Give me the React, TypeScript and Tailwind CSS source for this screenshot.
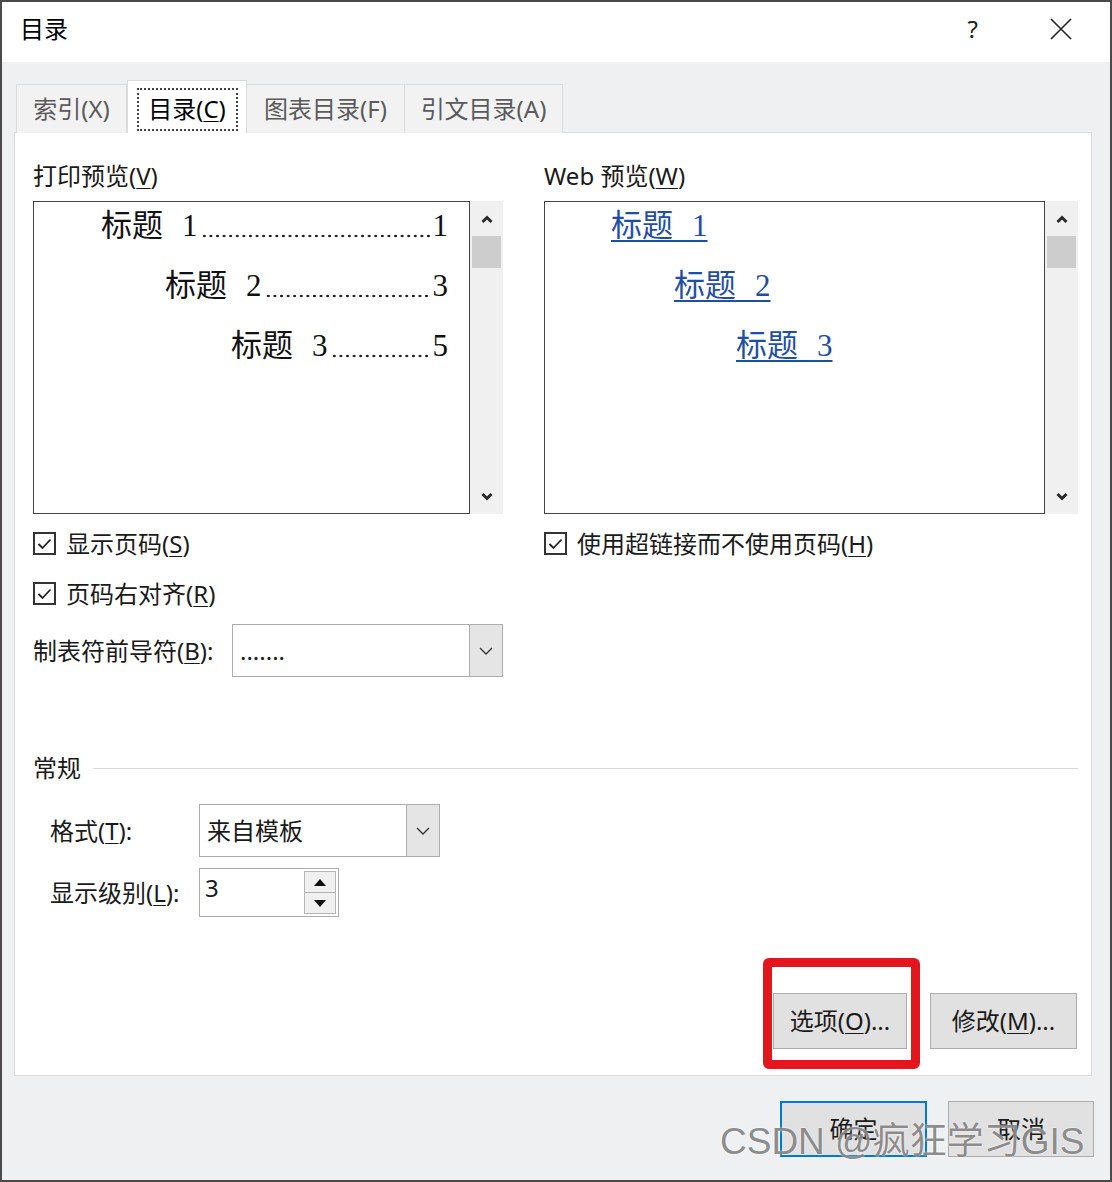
const ui = "font-['Noto_Sans','Noto_Sans_CJK_SC',sans-serif]";
const toc = "font-['Liberation_Serif','Noto_Sans_CJK_SC',serif]";

function U({ children }: { children: string }) {
  return <span className="underline underline-offset-[3px] decoration-1">{children}</span>;
}

function Chevron({ up }: { up?: boolean }) {
  return (
    <svg width="14" height="10" viewBox="0 0 14 10">
      <path
        d={up ? "M2.5 8 L7 3.5 L11.5 8" : "M2.5 2 L7 6.5 L11.5 2"}
        fill="none"
        stroke="#2a2a2a"
        strokeWidth="3"
      />
    </svg>
  );
}

function ScrollBar() {
  return (
    <div className="w-[33px] h-full bg-[#f0f0f0] flex flex-col items-center">
      <div className="h-[35px] flex items-center justify-center">
        <Chevron up />
      </div>
      <div className="w-[29px] h-[32px] bg-[#cdcdcd]" />
      <div className="flex-1" />
      <div className="h-[35px] flex items-center justify-center">
        <Chevron />
      </div>
    </div>
  );
}

function CheckBox({ children }: { children: React.ReactNode }) {
  return (
    <div className="flex items-center h-[23px]">
      <div className="w-[23px] h-[23px] border-2 border-[#333] bg-white flex items-center justify-center">
        <svg width="15" height="12" viewBox="0 0 15 12">
          <path d="M1.5 6 L5.5 10 L13.5 1.5" fill="none" stroke="#222" strokeWidth="1.8" />
        </svg>
      </div>
      <span className="ml-[10px] text-[24px] leading-[30px] text-[#1a1a1a]">{children}</span>
    </div>
  );
}

function Select({ value, w }: { value: string; w: string }) {
  return (
    <div className={`${w} h-[53px] border border-[#adadad] bg-white flex`}>
      <div className="flex-1 flex items-center pl-[7px] text-[24px] leading-[30px] text-[#1a1a1a]">
        {value}
      </div>
      <div className="w-[33px] bg-[#e5e5e5] border-l border-[#adadad] flex items-center justify-center">
        <svg width="14" height="8" viewBox="0 0 14 8">
          <path d="M1 1 L7 7 L13 1" fill="none" stroke="#333" strokeWidth="1.3" />
        </svg>
      </div>
    </div>
  );
}

// dotted tab leader drawn as a repeating dot pattern
function Leader() {
  return (
    <span className="flex-1 self-end mb-[8px] mx-[3px] h-[4px] bg-[radial-gradient(circle,#1a1a1a_1px,transparent_1.6px)] bg-[length:6.6px_4px] bg-repeat-x" />
  );
}

function TocRow({ n, page, pl }: { n: string; page: string; pl: string }) {
  return (
    <div className={`h-[40px] flex ${pl}`}>
      <span>标题</span>
      <span className="ml-[19px]">{n}</span>
      <Leader />
      <span>{page}</span>
    </div>
  );
}

function WebRow({ n, pl }: { n: string; pl: string }) {
  return (
    <div className={`h-[40px] ${pl}`}>
      <span className="underline underline-offset-[4px] decoration-[1.5px]">
        标题<span className="tracking-[1.75px]">&nbsp;&nbsp;</span>
        {n}
      </span>
    </div>
  );
}

function Button({ children, w, primary }: { children: React.ReactNode; w: string; primary?: boolean }) {
  return (
    <div
      className={`${w} h-[56px] bg-[#e1e1e1] flex items-center justify-center text-[24px] leading-[30px] text-[#1a1a1a] ${
        primary ? "border-2 border-[#0078d7]" : "border border-[#adadad]"
      }`}
    >
      {children}
    </div>
  );
}

export default function App() {
  return (
    <div className="w-[1112px] h-[1182px] bg-[#4a4a4a] p-[2px]">
      <div className={`relative h-full bg-[#eff0f1] flex flex-col ${ui}`}>
        {/* title bar */}
        <div className="h-[60px] bg-white flex items-center pb-[6px] pl-[18px] pr-[38px]">
          <span className="text-[24px] leading-[30px] text-black">目录</span>
          <span className="ml-auto text-[24px] text-[#222]">?</span>
          <svg className="ml-[72px]" width="22" height="22" viewBox="0 0 22 22">
            <path d="M1 1 L21 21 M21 1 L1 21" stroke="#222" strokeWidth="1.6" />
          </svg>
        </div>

        {/* tabs */}
        <div className="mt-[18px] ml-[14px] flex items-end -mb-px relative z-10">
          <div className="w-[111px] h-[49px] bg-[#f2f2f3] border border-[#dadbdc] border-b-0 flex items-center justify-center text-[24px] text-[#5a5a5a]">
            索引(X)
          </div>
          <div className="w-[120px] h-[53px] bg-white border border-[#dadbdc] border-b-0 flex items-center justify-center">
            <div className="w-[101px] h-[43px] mt-[4px] border-2 border-dotted border-[#444] flex items-center justify-center text-[24px] text-black">
              目录(<U>C</U>)
            </div>
          </div>
          <div className="w-[158px] h-[49px] bg-[#f2f2f3] border border-[#dadbdc] border-b-0 border-l-0 flex items-center justify-center text-[24px] text-[#5a5a5a]">
            图表目录(F)
          </div>
          <div className="w-[158px] h-[49px] bg-[#f2f2f3] border border-[#dadbdc] border-b-0 border-l-0 flex items-center justify-center text-[24px] text-[#5a5a5a]">
            引文目录(A)
          </div>
        </div>

        {/* panel */}
        <div className="ml-[12px] w-[1078px] h-[944px] bg-white border border-[#dadbdc] flex flex-col pl-[18px] pr-[13px]">
          <div className="h-[608px] flex">
            {/* print preview */}
            <div className="w-[470px] pt-[28px] flex flex-col">
              <div className="h-[30px] text-[24px] leading-[30px] text-[#1a1a1a]">
                打印预览(<U>V</U>)
              </div>
              <div className="mt-[10px] h-[313px] flex">
                <div className={`w-[437px] h-full border border-[#444] bg-white pt-[4px] pr-[21px] flex flex-col gap-[20px] text-[31px] leading-[40px] text-[#111] ${toc}`}>
                  <TocRow n="1" page="1" pl="pl-[67px]" />
                  <TocRow n="2" page="3" pl="pl-[131px]" />
                  <TocRow n="3" page="5" pl="pl-[197px]" />
                </div>
                <ScrollBar />
              </div>
              <div className="mt-[18px]">
                <CheckBox>
                  显示页码(<U>S</U>)
                </CheckBox>
              </div>
              <div className="mt-[27px]">
                <CheckBox>
                  页码右对齐(<U>R</U>)
                </CheckBox>
              </div>
              <div className="mt-[19px] flex items-center">
                <span className="w-[199px] text-[24px] leading-[30px] text-[#1a1a1a]">
                  制表符前导符(<U>B</U>):
                </span>
                <Select value="......." w="w-[271px]" />
              </div>
            </div>

            {/* separator */}
            <div className="ml-[20px] mt-[26px] w-px h-[582px] bg-[#a8a8a8]" />

            {/* web preview */}
            <div className="ml-[21px] w-[534px] pt-[28px] flex flex-col">
              <div className="h-[30px] text-[24px] leading-[30px] text-[#1a1a1a]">
                Web 预览(<U>W</U>)
              </div>
              <div className="mt-[10px] h-[313px] flex">
                <div className={`w-[501px] h-full border border-[#444] bg-white pt-[4px] flex flex-col gap-[20px] text-[31px] leading-[40px] text-[#1f4fa5] ${toc}`}>
                  <WebRow n="1" pl="pl-[66px]" />
                  <WebRow n="2" pl="pl-[129px]" />
                  <WebRow n="3" pl="pl-[191px]" />
                </div>
                <ScrollBar />
              </div>
              <div className="mt-[18px]">
                <CheckBox>
                  使用超链接而不使用页码(<U>H</U>)
                </CheckBox>
              </div>
            </div>
          </div>

          {/* general */}
          <div className="mt-[13px] h-[28px] flex items-center">
            <span className="text-[24px] leading-[30px] text-[#1a1a1a]">常规</span>
            <div className="ml-[12px] flex-1 h-px bg-[#d8d8d8]" />
          </div>
          <div className="mt-[22px] pl-[17px] flex items-center">
            <span className="w-[149px] text-[24px] leading-[30px] text-[#1a1a1a]">
              格式(<U>T</U>):
            </span>
            <Select value="来自模板" w="w-[241px]" />
          </div>
          <div className="mt-[11px] pl-[17px] flex items-center">
            <span className="w-[149px] text-[24px] leading-[30px] text-[#1a1a1a]">
              显示级别(<U>L</U>):
            </span>
            <div className="w-[140px] h-[49px] border border-[#adadad] bg-white flex">
              <div className="flex-1 pl-[5px] pt-[4px] text-[24px] leading-[30px] text-[#1a1a1a]">3</div>
              <div className="w-[34px] py-[2px] pr-[2px] flex flex-col">
                <div className="flex-1 border border-[#b5b5b5] bg-[#f0f0f0] flex items-center justify-center">
                  <svg width="12" height="7" viewBox="0 0 12 7">
                    <path d="M6 0 L12 7 L0 7 Z" fill="#111" />
                  </svg>
                </div>
                <div className="flex-1 border border-t-0 border-[#b5b5b5] bg-[#f0f0f0] flex items-center justify-center">
                  <svg width="12" height="7" viewBox="0 0 12 7">
                    <path d="M0 0 L12 0 L6 7 Z" fill="#111" />
                  </svg>
                </div>
              </div>
            </div>
          </div>

          <div className="mt-[76px] flex justify-end gap-[23px] pr-[1px]">
            <Button w="w-[134px]">
              选项(<U>O</U>)...
            </Button>
            <Button w="w-[147px]">
              修改(<U>M</U>)...
            </Button>
          </div>
        </div>

        {/* dialog buttons */}
        <div className="mt-[25px] pr-[16px] flex justify-end gap-[21px]">
          <Button w="w-[147px]" primary>
            确定
          </Button>
          <Button w="w-[146px]">取消</Button>
        </div>

        {/* red highlight annotation */}
        <div className="absolute left-[761px] top-[956px] w-[157px] h-[111px] border-[9px] border-[#e3161d] rounded-[6px]" />

        {/* watermark */}
        <div className="absolute left-[718px] top-[1116px] text-[37px] leading-[48px] text-[#6e6e6e]/80 font-['Liberation_Sans','Noto_Sans_CJK_SC',sans-serif] [text-shadow:0_0_2px_#fff]">
          CSDN @疯狂学习GIS
        </div>
      </div>
    </div>
  );
}
